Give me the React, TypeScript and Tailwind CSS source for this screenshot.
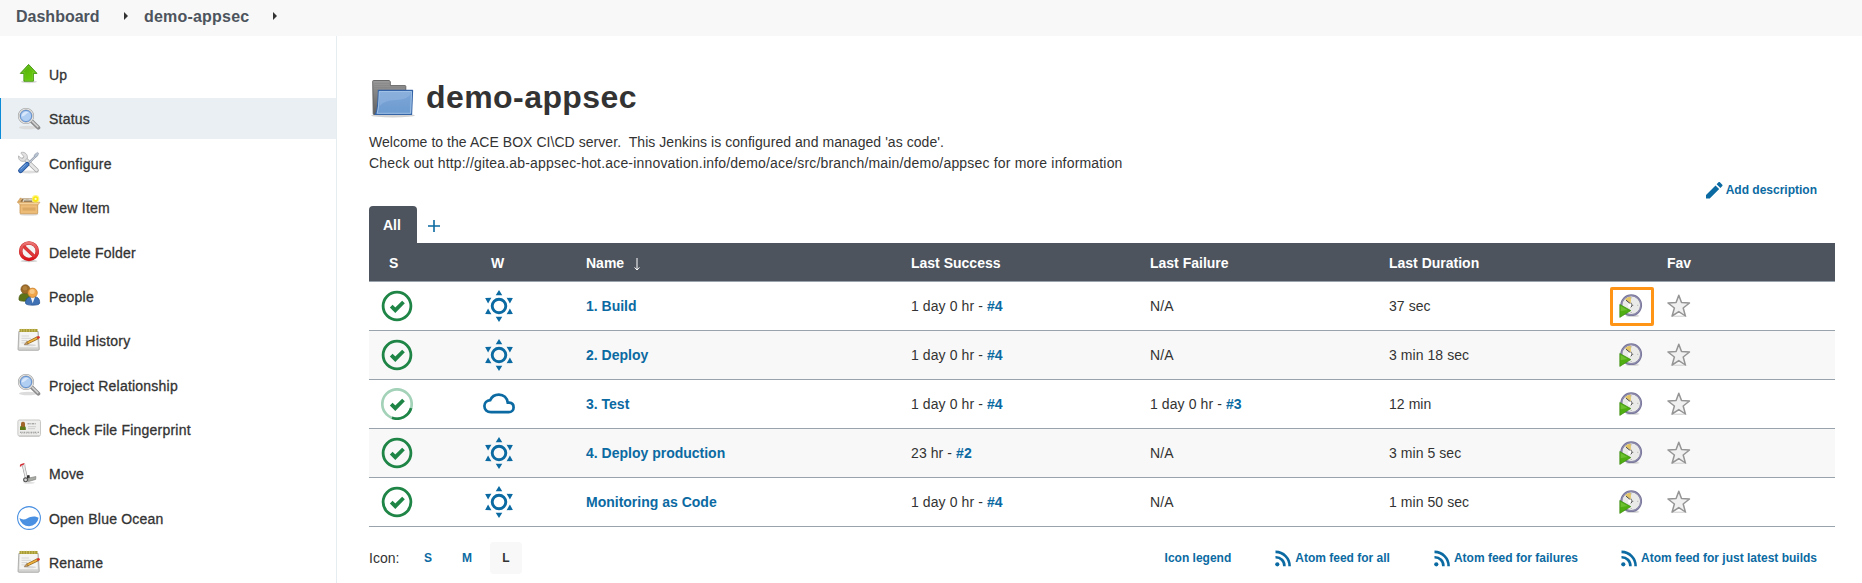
import React from "react";

type IconProps = { className?: string };

const UpIcon = () => (
  <svg width="24" height="24" viewBox="0 0 24 24">
    <defs>
      <linearGradient id="up" x1="0" y1="0" x2="1" y2="1">
        <stop offset="0" stopColor="#4fa50c" />
        <stop offset="0.6" stopColor="#63c40c" />
        <stop offset="1" stopColor="#6fd016" />
      </linearGradient>
    </defs>
    <ellipse cx="12" cy="19.8" rx="8" ry="1.5" fill="#d9d9d9" />
    <path d="M11.6 2.4 20 11.4H16.4V19.2H6.9V11.4H3.3Z" fill="url(#up)" stroke="#3f9308" strokeWidth="0.9" strokeLinejoin="round" />
    <path d="M11.6 3.9 17.6 10.6H15.5V18.3H7.8V10.6H5.5Z" fill="none" stroke="#8fd94f" strokeWidth="0.5" opacity="0.7" />
  </svg>
);

const SearchIcon = () => (
  <svg width="24" height="24" viewBox="0 0 24 24">
    <ellipse cx="11" cy="20.5" rx="9" ry="1.8" fill="#dcdcdc" />
    <path d="M14.5 14 21.3 20.7" stroke="#8b8b8b" strokeWidth="4" strokeLinecap="round" />
    <path d="M15 14 20.8 19.8" stroke="#d4d4d4" strokeWidth="1.6" strokeLinecap="round" />
    <circle cx="9" cy="9" r="7" fill="#b3cdf0" stroke="#9c9c9c" strokeWidth="2.2" />
    <circle cx="9" cy="9" r="7" fill="none" stroke="#e6e6e6" strokeWidth="1.1" />
    <circle cx="9" cy="9" r="5.6" fill="#b0cdf2" stroke="#5f8fce" strokeWidth="0.9" />
    <path d="M4.6 9.5C4.8 5.5 9 3.9 12 5.4 9 6 8.3 9.2 4.6 9.5Z" fill="#d9e7fa" />
  </svg>
);

const ConfigureIcon = () => (
  <svg width="24" height="24" viewBox="0 0 24 24">
    <ellipse cx="12" cy="21" rx="10" ry="1.5" fill="#dedede" />
    <path d="M7.5 7.5 19.7 19.3" stroke="#a6a6a6" strokeWidth="4.2" strokeLinecap="round" />
    <path d="M7.5 7.5 19.5 19.1" stroke="#e6e6e6" strokeWidth="2.8" strokeLinecap="round" />
    <path d="M4 2.2 6.8 5.4 6 7.2 3.7 7 1.6 4.8C1 8.5 3.5 11 7.5 10.2L10.4 7C10.8 3.6 8 .6 4.3 1.4Z" fill="#e0e0e0" stroke="#a3a3a3" strokeWidth="0.7" />
    <path d="M10.8 13 19.5 4.2" stroke="#8f98a6" strokeWidth="2.2" />
    <path d="M10.8 13 19.5 4.2" stroke="#d3dbe7" strokeWidth="1" />
    <path d="M18 3.2 20.5 1.4 21.6 2.3 20.5 5 18.4 6.4 17 5Z" fill="#b9c4d3" stroke="#8c97a8" strokeWidth="0.6" />
    <path d="M3.5 19.7 10 13.4" stroke="#24539b" strokeWidth="4.8" strokeLinecap="round" />
    <path d="M3.6 19.5 9.9 13.4" stroke="#4a80c8" strokeWidth="3.2" strokeLinecap="round" />
    <path d="M3.7 18.3 8.8 13.4" stroke="#8fb6e6" strokeWidth="0.8" />
  </svg>
);

const NewItemIcon = () => (
  <svg width="24" height="24" viewBox="0 0 24 24">
    <ellipse cx="12" cy="19.6" rx="9.5" ry="1.1" fill="#e2e2e2" />
    <path d="M5 3.4H18L21 8H2.5Z" fill="#94703f" />
    <path d="M6.2 4.6C8 3.2 10 5 12 4S15 4.4 17 4.4L18 7.2H5.3Z" fill="#d8d2c4" />
    <path d="M7 6.2H15" stroke="#6b5534" strokeWidth="1" />
    <path d="M4.5 3.2 2.6 7.7.5 7.2 3.3 3Z" fill="#e9b66e" stroke="#b9813b" strokeWidth="0.5" />
    <path d="M3 7.4H20.7V18Q20.7 18.8 19.9 18.8H3.8Q3 18.8 3 18Z" fill="#edbd78" stroke="#c08a43" strokeWidth="0.7" />
    <path d="M.6 7.2H23L21 9.8H3Z" fill="#f5d29b" stroke="#c99652" strokeWidth="0.6" />
    <path d="M5.5 12.5H18.5V15.6H5.5Z" fill="#cf9a57" opacity="0.6" />
    <circle cx="18.6" cy="3.9" r="3.8" fill="#fff35a" opacity="0.75" />
    <circle cx="18.6" cy="3.9" r="2.6" fill="#fbe90a" />
    <circle cx="18.6" cy="3.9" r="1.1" fill="#fffbd0" />
  </svg>
);

const DeleteIcon = () => (
  <svg width="24" height="24" viewBox="0 0 24 24">
    <defs>
      <linearGradient id="del" x1="0" y1="0" x2="0" y2="1">
        <stop offset="0" stopColor="#ea7472" />
        <stop offset="1" stopColor="#d8141a" />
      </linearGradient>
    </defs>
    <ellipse cx="12" cy="21" rx="8.5" ry="1.2" fill="#d0d0d0" />
    <circle cx="12" cy="11.2" r="8.3" fill="#f4f4f4" stroke="#cb2a2c" strokeWidth="3.5" />
    <path d="M6.3 6 17.6 16.6" stroke="#cb2a2c" strokeWidth="3.3" />
    <circle cx="12" cy="11.2" r="8.3" fill="none" stroke="url(#del)" strokeWidth="2.7" />
    <path d="M6.3 6 17.6 16.6" stroke="#df3a3b" strokeWidth="2.4" />
  </svg>
);

const PeopleIcon = () => (
  <svg width="24" height="24" viewBox="0 0 24 24">
    <path d="M2 15.8C1.7 11.3 4 9.2 8 9.2S13 11 13 15.8C13 17.6 2.2 17.8 2 15.8Z" fill="#5c7317" stroke="#45580e" strokeWidth="0.7" />
    <circle cx="8.4" cy="5.2" r="4.5" fill="#9d6a27" stroke="#77501d" strokeWidth="0.6" />
    <circle cx="8" cy="4.2" r="2.3" fill="#bb8c45" opacity="0.7" />
    <path d="M8.6 19.3C8.2 14.6 11.2 12.4 15.7 12.4S23 14.4 22.6 19.3C22.4 21.8 8.8 21.8 8.6 19.3Z" fill="#3f72b5" stroke="#255291" strokeWidth="0.8" />
    <path d="M13.6 13 15.7 19.3 18 13Z" fill="#f1f5fa" />
    <circle cx="15.6" cy="8.8" r="4.7" fill="#f0a548" stroke="#c57a23" strokeWidth="0.7" />
    <circle cx="15.2" cy="7.6" r="2.5" fill="#f9ce91" opacity="0.85" />
  </svg>
);

const NotesIcon = () => (
  <svg width="24" height="24" viewBox="0 0 24 24">
    <path d="M1.8 3.5H21.2L22.3 21.2Q22.2 22.3 21 22.3H2Q1 22.3 1 21.2Z" fill="#d2d2d0" stroke="#9a9a98" strokeWidth="0.7" />
    <path d="M2.8 4H20.2L20.8 19.3H2.3Z" fill="#f4f4f3" />
    <path d="M2.5 1H20.5V4H2.5Z" fill="#a79b34" />
    <path d="M4.3 .8V3.8M7 .8V3.8M9.7 .8V3.8M12.4 .8V3.8M15.1 .8V3.8M17.8 .8V3.8" stroke="#d6cc74" strokeWidth="0.8" />
    <path d="M4.5 8H12M4.5 10.3H14M4.5 12.6H10.5M4.5 14.9H8" stroke="#d5d5d5" strokeWidth="1" />
    <ellipse cx="13" cy="17.2" rx="6" ry="1.1" fill="#d7d7d7" />
    <path d="M10.2 15 21 9.6" stroke="#8d611e" strokeWidth="3" />
    <path d="M10.2 15 20.2 10" stroke="#eeb33f" strokeWidth="1.6" />
    <path d="M9.6 13.7 7.3 16.6 11.2 16.2Z" fill="#cfa46a" stroke="#6e4d1f" strokeWidth="0.5" />
    <path d="M19.6 8.8 21.6 7.9Q23.4 8.2 22.9 10L20.8 11.1Z" fill="#d8342c" />
  </svg>
);

const FingerprintIcon = () => (
  <svg width="24" height="24" viewBox="0 0 24 24">
    <rect x="0.9" y="3" width="22.6" height="16" rx="1.5" fill="#eeeeec" stroke="#c8c8c6" strokeWidth="1" />
    <path d="M2 19.2H22.5" stroke="#b4b4b2" strokeWidth="0.7" />
    <path d="M3 12.9V10.7Q3 8.5 5.8 8.5T8.8 10.7V12.9Z" fill="#5c7a17" />
    <rect x="4" y="4.7" width="4" height="5.4" rx="1.8" fill="#a2652a" />
    <path d="M10.5 6.8H19" stroke="#888" strokeWidth="1" strokeDasharray="2.2 0.6 1 0.6" />
    <path d="M11 9.7H19M11 11.7H18" stroke="#c8c8c8" strokeWidth="0.9" />
    <path d="M3 15.2H22" stroke="#8c8c8c" strokeWidth="1.1" strokeDasharray="1.6 0.7 0.8 0.5" />
    <path d="M4 16.6H21" stroke="#adadad" strokeWidth="0.8" strokeDasharray="0.8 0.9" />
  </svg>
);

const MoveIcon = () => (
  <svg width="24" height="24" viewBox="0 0 24 24">
    <ellipse cx="12" cy="20.8" rx="6" ry="0.9" fill="#dedede" />
    <path d="M6.4 3.2 9.6 17" stroke="#999" strokeWidth="3" />
    <path d="M6.4 3.2 9.6 17" stroke="#ededed" strokeWidth="1.8" />
    <path d="M3.4 4.6 4 2.9 7.5 1.8" stroke="#d12e35" strokeWidth="1.5" fill="none" />
    <path d="M7.5 2 8.3 5" stroke="#dadada" strokeWidth="1.5" />
    <path d="M9.9 13.6 12.4 13 13 16.3 10 16.8Z" fill="#2f2f2f" />
    <path d="M11 16.2 18.9 14.5 18.7 17.4 11.4 19.6Z" fill="#a9aba5" stroke="#777974" strokeWidth="0.6" />
    <circle cx="8.6" cy="17.8" r="2.5" fill="#555" />
    <circle cx="8.6" cy="17.8" r="1.4" fill="#d6d6d6" />
  </svg>
);

const OceanIcon = () => (
  <svg width="24" height="24" viewBox="0 0 24 24">
    <circle cx="12" cy="12" r="11.4" fill="#fff" stroke="#4a90e2" strokeWidth="1.1" />
    <path d="M2.4 12C5 13.8 7.6 13.8 10.5 12.2S17.5 9.4 21.6 11.8A9.7 9.7 0 0 1 2.4 12Z" fill="#4a90e2" />
  </svg>
);

const FolderIcon = () => (
  <svg width="48" height="48" viewBox="0 0 48 48">
    <defs>
      <linearGradient id="fback" x1="0" y1="0" x2="0" y2="1">
        <stop offset="0" stopColor="#9b9b9b" />
        <stop offset="1" stopColor="#5e5e5e" />
      </linearGradient>
      <linearGradient id="ffront" x1="0" y1="0" x2="0" y2="1">
        <stop offset="0" stopColor="#7ca6d8" />
        <stop offset="1" stopColor="#6d9bd0" />
      </linearGradient>
    </defs>
    <ellipse cx="24" cy="41.6" rx="22" ry="1.8" fill="#d2d2d2" />
    <path d="M3.7 7.2Q3.7 6.5 4.5 6.5H20.2L21.3 7.5V11.6H36Q36.8 11.6 36.8 12.4V30L10 40.5H5Q4.2 40.5 4.2 39.7Z" fill="url(#fback)" stroke="#5f5f5f" strokeWidth="0.9" />
    <path d="M5.2 9.3H20M5.2 11.4H20M5.2 13.5H36M5.2 15.6H9" stroke="#858585" strokeWidth="0.7" />
    <path d="M9.3 16.4H43.6L42.6 40.4H6.2Q9 37 9.3 16.4Z" fill="url(#ffront)" stroke="#3564a6" strokeWidth="1.1" strokeLinejoin="round" />
    <path d="M10.3 17.5H42.5L41.6 39.3H8.2Q9.9 34 10.3 17.5Z" fill="none" stroke="#a9c8ea" strokeWidth="0.8" />
    <path d="M10.8 32Q15 26.5 27 26T41.6 20V18H10.9Z" fill="#a5c3e7" opacity="0.35" />
  </svg>
);

const Check = () => <path d="M10.2 16.1 14.3 20.2 22.5 12" fill="none" stroke="#1e8546" strokeWidth="3.8" />;

const StatusIcon = ({ running }: { running?: boolean }) => (
  <svg width="32" height="32" viewBox="0 0 32 32">
    {running ? (
      <>
        <circle cx="16" cy="16" r="14.7" fill="none" stroke="#a3d2b9" strokeWidth="2.7" />
        <path d="M30.1 20.2A14.7 14.7 0 0 1 11 29.8" fill="none" stroke="#1e8546" strokeWidth="2.7" />
      </>
    ) : (
      <circle cx="16" cy="16" r="13.9" fill="none" stroke="#1e8546" strokeWidth="2.8" />
    )}
    <Check />
  </svg>
);

const SunIcon = () => (
  <svg width="32" height="32" viewBox="-16 -16 32 32" fill="#0b6aa2">
    <circle r="6.8" fill="none" stroke="#0b6aa2" strokeWidth="2.9" />
    <path d="M0-16 3.3-10.7H-3.3Z" />
    <path d="M0-16 3.3-10.7H-3.3Z" transform="rotate(60)" />
    <path d="M0-16 3.3-10.7H-3.3Z" transform="rotate(120)" />
    <path d="M0-16 3.3-10.7H-3.3Z" transform="rotate(180)" />
    <path d="M0-16 3.3-10.7H-3.3Z" transform="rotate(240)" />
    <path d="M0-16 3.3-10.7H-3.3Z" transform="rotate(300)" />
  </svg>
);

const CloudIcon = () => (
  <svg width="32" height="32" viewBox="0 0 32 32">
    <path
      d="M8 24.2C4 24.2 1.4 21.5 1.4 18.1C1.4 14.9 3.9 12.4 7.2 12.2C8.6 8.9 11.9 6.6 15.9 6.6C20.6 6.6 24.1 9.9 24.8 14.7H26.2C29 15 30.6 17 30.6 19.4C30.6 22.2 28.5 24.2 25.7 24.2Z"
      fill="none"
      stroke="#0b6aa2"
      strokeWidth="2.7"
    />
  </svg>
);

const ClockIcon = () => (
  <svg width="24" height="24" viewBox="0 0 24 24">
    <ellipse cx="13.5" cy="21.8" rx="7" ry="1.3" fill="#d8d8d8" />
    <circle cx="12.2" cy="11.2" r="9.9" fill="#eaeae9" stroke="#77759a" strokeWidth="2" />
    <circle cx="12.2" cy="11.2" r="9.6" fill="none" stroke="#9d9bb8" strokeWidth="0.7" />
    <path d="M11.8 9.4 6 5.2Q8.6 2.8 12 2.8Z" fill="#e3c566" />
    <path d="M7 6.2 11.5 9.8M12.2 10.2V8.8M12.8 11.4H14.2" stroke="#4b4b4b" strokeWidth="1" />
    <circle cx="11.2" cy="11.6" r="2.2" fill="#fff" />
    <path d="M12.8 10.2Q13.4 12 11.8 13.4" fill="none" stroke="#4b4b4b" strokeWidth="1" />
    <path d="M12.2 3.3V4.3M19.3 11.3H18.3M12.2 18V19" stroke="#a8a8a8" strokeWidth="1" />
    <path d="M.8 10.4 11.8 16.6.8 23.4Z" fill="#4fae12" stroke="#3a8d0d" strokeWidth="0.7" />
    <path d="M1.7 12 8.6 16.1 1.7 17.2Z" fill="#8bd34f" opacity="0.5" />
  </svg>
);

const StarIcon = () => (
  <svg width="24" height="24" viewBox="0 0 24 24">
    <ellipse cx="12" cy="22.2" rx="8.5" ry="0.8" fill="#dadada" />
    <path d="M11.8 1.2 14.5 8.5 22.5 9 16.2 14 18.4 22 11.8 17.6 5.1 22 7.4 14 1 9 9.1 8.5Z" fill="#f0f0f0" stroke="#959595" strokeWidth="1.5" strokeLinejoin="round" />
  </svg>
);

const RssIcon = () => (
  <svg width="17" height="17" viewBox="0 0 17 17" fill="none" stroke="#0b6aa2">
    <circle cx="2.3" cy="14.3" r="2.1" fill="#0b6aa2" stroke="none" />
    <path d="M.5 7.2A8.6 8.6 0 0 1 9.4 16.2" strokeWidth="2.6" />
    <path d="M.5 1.9A14 14 0 0 1 14.6 16.2" strokeWidth="2.6" />
  </svg>
);

const PencilIcon = () => (
  <svg width="24" height="24" viewBox="0 0 24 24" fill="#0b6aa2">
    <path d="M4 16.9V20.6H7.7L17.2 11.1 13.5 7.4ZM20.3 8.1C20.7 7.7 20.7 7.1 20.3 6.7L17.9 4.3C17.5 3.9 16.9 3.9 16.5 4.3L14.6 6.2 18.4 10Z" />
  </svg>
);

const Caret = ({ className = "" }: IconProps) => (
  <svg width="4" height="8" viewBox="0 0 4 8" className={className}>
    <path d="M0 0 4 4 0 8Z" fill="#333" />
  </svg>
);

const tasks: { label: string; icon: React.ReactNode; active?: boolean }[] = [
  { label: "Up", icon: <UpIcon /> },
  { label: "Status", icon: <SearchIcon />, active: true },
  { label: "Configure", icon: <ConfigureIcon /> },
  { label: "New Item", icon: <NewItemIcon /> },
  { label: "Delete Folder", icon: <DeleteIcon /> },
  { label: "People", icon: <PeopleIcon /> },
  { label: "Build History", icon: <NotesIcon /> },
  { label: "Project Relationship", icon: <SearchIcon /> },
  { label: "Check File Fingerprint", icon: <FingerprintIcon /> },
  { label: "Move", icon: <MoveIcon /> },
  { label: "Open Blue Ocean", icon: <OceanIcon /> },
  { label: "Rename", icon: <NotesIcon /> },
];

type Run = { text: string; build?: string };
type Job = { name: string; success: Run; failure: Run; duration: string; running?: boolean; cloudy?: boolean; marked?: boolean };

const jobs: Job[] = [
  { name: "1. Build", success: { text: "1 day 0 hr", build: "#4" }, failure: { text: "N/A" }, duration: "37 sec", marked: true },
  { name: "2. Deploy", success: { text: "1 day 0 hr", build: "#4" }, failure: { text: "N/A" }, duration: "3 min 18 sec" },
  { name: "3. Test", success: { text: "1 day 0 hr", build: "#4" }, failure: { text: "1 day 0 hr", build: "#3" }, duration: "12 min", running: true, cloudy: true },
  { name: "4. Deploy production", success: { text: "23 hr", build: "#2" }, failure: { text: "N/A" }, duration: "3 min 5 sec" },
  { name: "Monitoring as Code", success: { text: "1 day 0 hr", build: "#4" }, failure: { text: "N/A" }, duration: "1 min 50 sec" },
];

const RunCell = ({ run }: { run: Run }) => (
  <div className="tracking-[0.09px]">
    {run.text}
    {run.build && (
      <>
        {" - "}
        <a className="font-bold text-[#0b6aa2]">{run.build}</a>
      </>
    )}
  </div>
);

const columns = "grid grid-cols-[114px_103px_325px_239px_239px_230px_48px_1fr] items-center";

export default function App() {
  return (
    <div className="flex h-[583px] w-[1862px] flex-col overflow-hidden bg-white font-['Liberation_Sans',Arial,sans-serif] text-sm text-[#333]">
      <header className="flex h-9 shrink-0 items-center bg-[#f8f8f8] pb-1 pl-4 text-base font-bold text-[#4d545d]">
        <span className="w-[108px] pt-0.5">Dashboard</span>
        <Caret className="mr-4" />
        <span className="w-[129px] pt-0.5 tracking-[0.2px]">demo-appsec</span>
        <Caret />
      </header>

      <div className="flex min-h-0 flex-1">
        <nav className="flex w-[337px] shrink-0 flex-col gap-[3.36px] border-r border-[#e6edf1] pt-[17.8px]">
          {tasks.map((t) => (
            <a
              key={t.label}
              className={
                t.active
                  ? "flex h-[41px] shrink-0 items-center gap-2 border-l border-[#0b8bd8] bg-[#e9eff2] pl-4"
                  : "flex h-[41px] shrink-0 items-center gap-2 border-l border-transparent pl-4"
              }
            >
              {t.icon}
              <span className="pt-[1.6px] tracking-[0.22px] [-webkit-text-stroke:0.3px_#333]">{t.label}</span>
            </a>
          ))}
        </nav>

        <main className="ml-8 flex w-[1466px] shrink-0 flex-col pt-[37px]">
          <div className="flex h-12 items-center gap-[9px]">
            <div className="pt-0.5">
              <FolderIcon />
            </div>
            <h1 className="text-[32px] leading-none font-bold tracking-[0.43px]">demo-appsec</h1>
          </div>
          <div className="mt-[11px] leading-[21px] whitespace-pre">
            <p className="tracking-[0.05px]">{"Welcome to the ACE BOX CI\\CD server.  This Jenkins is configured and managed 'as code'."}</p>
            <p className="tracking-[0.18px]">
              Check out http://gitea.ab-appsec-hot.ace-innovation.info/demo/ace/src/branch/main/demo/appsec for more information
            </p>
          </div>
          <div className="mt-1 flex h-6 items-center justify-end pr-[18px] text-xs font-bold text-[#0b6aa2]">
            <PencilIcon />
            <span>Add description</span>
          </div>

          <div className="mt-1 flex h-[37px]">
            <div className="w-12 rounded-t bg-[#4d545d] pt-[9px] pl-3.5 leading-5 font-bold text-white">All</div>
            <svg width="12" height="12" viewBox="0 0 12 12" className="mt-3.5 ml-[11px]">
              <path d="M6 0V12M0 6H12" stroke="#0b6aa2" strokeWidth="1.6" />
            </svg>
          </div>

          <div className={`${columns} h-[39px] shrink-0 border-b border-[#98a3ae] bg-[#4d545d] pt-0.5 font-bold text-white`}>
            <div className="pl-5">S</div>
            <div className="pl-2">W</div>
            <div className="flex items-center">
              Name
              <svg width="6" height="13" viewBox="0 0 6 13" className="mt-0.5 ml-[10px]">
                <path d="M3 0V12M.6 9.4 3 12 5.4 9.4" fill="none" stroke="#fff" strokeWidth="1" />
              </svg>
            </div>
            <div>Last Success</div>
            <div>Last Failure</div>
            <div>Last Duration</div>
            <div />
            <div>Fav</div>
          </div>
          {jobs.map((j) => (
            <div key={j.name} className={`${columns} h-[49px] shrink-0 border-b border-[#98a3ae] odd:bg-[#f8f8f8] even:bg-white`}>
              <div className="pl-3">
                <StatusIcon running={j.running} />
              </div>
              <div>{j.cloudy ? <CloudIcon /> : <SunIcon />}</div>
              <div className="font-bold text-[#0b6aa2]">{j.name}</div>
              <RunCell run={j.success} />
              <RunCell run={j.failure} />
              <div className="tracking-[0.06px]">{j.duration}</div>
              <div className="relative">
                <ClockIcon />
                {j.marked && <div className="absolute -top-[7px] -left-[9px] h-[39px] w-11 rounded-[2px] border-3 border-[#ff9416]" />}
              </div>
              <StarIcon />
            </div>
          ))}

          <div className="mt-[15px] flex h-8 shrink-0 items-center text-xs font-bold text-[#0b6aa2]">
            <span className="w-[55px] text-sm font-normal text-[#333]">Icon:</span>
            <span className="w-[38px]">S</span>
            <span className="w-7">M</span>
            <span className="flex size-8 items-center justify-center rounded bg-[#f8f8f8] text-[#333]">L</span>
            <div className="ml-auto flex items-center pr-[18px]">
              <span className="mr-11">Icon legend</span>
              <span className="mr-11 flex items-center gap-[3px]">
                <RssIcon />
                Atom feed for all
              </span>
              <span className="mr-[43px] flex items-center gap-[3px]">
                <RssIcon />
                Atom feed for failures
              </span>
              <span className="flex items-center gap-[3px]">
                <RssIcon />
                Atom feed for just latest builds
              </span>
            </div>
          </div>
        </main>
      </div>
    </div>
  );
}
